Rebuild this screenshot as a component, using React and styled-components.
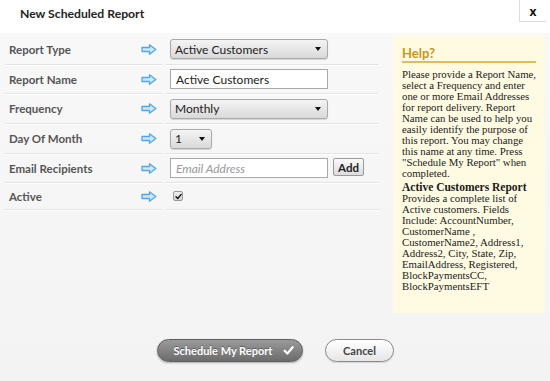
import React from "react";
import styled, { createGlobalStyle } from "styled-components";

const GlobalStyle = createGlobalStyle`
  html, body { margin: 0; padding: 0; }
  body { font-family: Lato, "Open Sans", sans-serif; background: #fff; }
`;

const Dialog = styled.div`
  width: 550px;
  height: 381px;
  display: flex;
  flex-direction: column;
  background: linear-gradient(#ffffff 0px, #f8f8f8 40px, #f3f3f3 100%);
  overflow: hidden;
`;

const Header = styled.div`
  height: 33px;
  display: flex;
  justify-content: space-between;
  align-items: flex-start;
  background: #fff;
  flex: none;
`;

const Title = styled.h1`
  margin: 6px 0 0 20px;
  font-size: 12.2px;
  font-weight: 700;
  color: #222;
  line-height: 16px;
`;

const CloseButton = styled.button`
  width: 27px;
  height: 22px;
  margin-right: 4px;
  padding: 0;
  border: none;
  border-left: 1px solid #dcdcdc;
  border-bottom: 1px solid #dcdcdc;
  background: #fff;
  font-family: "Open Sans", sans-serif;
  font-size: 12px;
  font-weight: 700;
  color: #111;
  line-height: 24px;
`;

const Content = styled.div`
  display: flex;
  align-items: flex-start;
  padding: 0 5px;
  gap: 15px;
`;

const Form = styled.div`
  width: 373px;
  margin-top: 1px;
  display: flex;
  flex-direction: column;
`;

const Row = styled.div`
  display: flex;
  height: ${(p) => p.$h || 29}px;
`;

const Cell = styled.div`
  display: flex;
  align-items: center;
  border-bottom: 1px solid #e3e3e3;
  box-shadow: 0 1px 0 #fff;
`;

const LabelCell = styled(Cell)`
  width: 158px;
  box-sizing: border-box;
  justify-content: space-between;
  padding: 0 6px 0 4px;
`;

const FieldCell = styled(Cell)`
  flex: 1;
  margin-left: 3px;
  padding-left: 4px;
  gap: 5px;
`;

const Label = styled.span`
  font-size: 11.5px;
  font-weight: 700;
  color: #555;
`;

const SelectBox = styled.div`
  width: ${(p) => p.$w}px;
  height: 20px;
  box-sizing: border-box;
  display: flex;
  align-items: center;
  justify-content: space-between;
  padding: 0 6px 0 4px;
  border: 1px solid #a9a9a9;
  border-radius: 3px;
  background: linear-gradient(#f4f4f4, #d9d9d9);
  box-shadow: 0 1px 1px rgba(0, 0, 0, 0.15);
  font-size: 12px;
  color: #222;
`;

const Caret = styled.span`
  width: 0;
  height: 0;
  border-left: 3.5px solid transparent;
  border-right: 3.5px solid transparent;
  border-top: 4px solid #111;
`;

const TextInput = styled.input`
  width: 158px;
  height: 20px;
  box-sizing: border-box;
  border: 1px solid #a9a9a9;
  background: #fff;
  padding: 0 5px;
  font-family: Lato, sans-serif;
  font-size: 12px;
  color: #222;
  outline: none;
  &::placeholder {
    color: #999;
    font-style: italic;
  }
`;

const AddButton = styled.button`
  height: 18px;
  width: 31px;
  padding: 0;
  border: 1px solid #9a9a9a;
  border-radius: 2px;
  background: linear-gradient(#fbfbfb, #dcdcdc);
  font-family: Lato, sans-serif;
  font-size: 11.5px;
  font-weight: 700;
  color: #222;
  margin-bottom: 2px;
`;

const CheckBox = styled.span`
  width: 10px;
  height: 10px;
  box-sizing: border-box;
  margin-left: 3px;
  border: 1px solid #9a9a9a;
  border-radius: 2px;
  background: linear-gradient(#eee, #d2d2d2);
  display: flex;
  align-items: center;
  justify-content: center;
`;

const Help = styled.aside`
  width: 152px;
  height: 278px;
  margin-top: 2px;
  box-sizing: border-box;
  background: #fffbe3;
  padding: 10px 9px 0 9px;
  font-family: "Liberation Serif", "Times New Roman", serif;
  color: #1a1a1a;
`;

const HelpTitle = styled.h2`
  margin: 0;
  font-family: Lato, sans-serif;
  font-size: 13px;
  font-weight: 700;
  color: #c9961a;
  line-height: 16px;
  border-bottom: 2px solid #e2bd55;
`;

const HelpText = styled.p`
  margin: ${(p) => p.$mt || 0}px 0 0 0;
  font-size: 10.8px;
  line-height: 11px;
  white-space: nowrap;
`;

const Strong = styled.strong`
  font-weight: 700;
  font-size: 11.5px;
`;

const Footer = styled.div`
  display: flex;
  justify-content: center;
  gap: 22px;
  margin-top: 26px;
  padding-left: 1px;
`;

const PillButton = styled.button`
  height: 23px;
  width: ${(p) => p.$w}px;
  border-radius: 12px;
  display: flex;
  align-items: center;
  justify-content: center;
  gap: 11px;
  font-family: Lato, sans-serif;
  font-size: 11px;
  font-weight: 700;
  padding: ${(p) => (p.$primary ? "0 0 0 8px" : "0")};
  border: 1px solid ${(p) => (p.$primary ? "#5f5f5f" : "#8a8a8a")};
  color: ${(p) => (p.$primary ? "#fff" : "#444")};
  text-shadow: ${(p) => (p.$primary ? "0 -1px 0 rgba(0,0,0,0.35)" : "none")};
  background: ${(p) =>
    p.$primary
      ? "linear-gradient(#9a9a9a, #6c6c6c)"
      : "linear-gradient(#ffffff, #e6e6e6)"};
  box-shadow: ${(p) =>
    p.$primary ? "0 1px 2px rgba(0,0,0,0.3)" : "0 1px 1px rgba(0,0,0,0.12)"};
`;

const Arrow = () => (
  <svg width="16" height="11" viewBox="0 0 16 11">
    <path
      d="M1 3.5 H8.5 V0.8 L14.8 5.5 L8.5 10.2 V7.5 H1 Z"
      fill="#cfe7ff"
      stroke="#4ea6f2"
      strokeWidth="1.3"
      strokeLinejoin="round"
    />
  </svg>
);

const Check = ({ size = 8, color = "#111" }) => (
  <svg width={size} height={size} viewBox="0 0 10 10">
    <path d="M1.5 5.2 L4 7.8 L8.8 2" fill="none" stroke={color} strokeWidth="2" strokeLinecap="round" strokeLinejoin="round" />
  </svg>
);

const FormRow = ({ label, h, children }) => (
  <Row $h={h}>
    <LabelCell>
      <Label>{label}</Label>
      <Arrow />
    </LabelCell>
    <FieldCell>{children}</FieldCell>
  </Row>
);

export default function App() {
  return (
    <>
      <GlobalStyle />
      <Dialog>
        <Header>
          <Title>New Scheduled Report</Title>
          <CloseButton>x</CloseButton>
        </Header>
        <Content>
          <Form>
            <FormRow label="Report Type" h={31}>
              <SelectBox $w={158}>
                <span>Active Customers</span>
                <Caret />
              </SelectBox>
            </FormRow>
            <FormRow label="Report Name" h={29}>
              <TextInput defaultValue="Active Customers" />
            </FormRow>
            <FormRow label="Frequency" h={30}>
              <SelectBox $w={158}>
                <span>Monthly</span>
                <Caret />
              </SelectBox>
            </FormRow>
            <FormRow label="Day Of Month" h={30}>
              <SelectBox $w={42}>
                <span>1</span>
                <Caret />
              </SelectBox>
            </FormRow>
            <FormRow label="Email Recipients" h={29}>
              <TextInput placeholder="Email Address" />
              <AddButton>Add</AddButton>
            </FormRow>
            <FormRow label="Active" h={27}>
              <CheckBox>
                <Check size={7} />
              </CheckBox>
            </FormRow>
          </Form>
          <Help>
            <HelpTitle>Help?</HelpTitle>
            <HelpText $mt={6}>
              Please provide a Report Name,<br />
              select a Frequency and enter<br />
              one or more Email Addresses<br />
              for report delivery. Report<br />
              Name can be used to help you<br />
              easily identify the purpose of<br />
              this report. You may change<br />
              this name at any time. Press<br />
              "Schedule My Report" when<br />
              completed.
            </HelpText>
            <HelpText $mt={3}>
              <Strong>Active Customers Report</Strong><br />
              Provides a complete list of<br />
              Active customers. Fields<br />
              Include: AccountNumber,<br />
              CustomerName ,<br />
              CustomerName2, Address1,<br />
              Address2, City, State, Zip,<br />
              EmailAddress, Registered,<br />
              BlockPaymentsCC,<br />
              BlockPaymentsEFT
            </HelpText>
          </Help>
        </Content>
        <Footer>
          <PillButton $primary $w={146}>
            Schedule My Report
            <Check size={11} color="#fff" />
          </PillButton>
          <PillButton $w={69}>Cancel</PillButton>
        </Footer>
      </Dialog>
    </>
  );
}
